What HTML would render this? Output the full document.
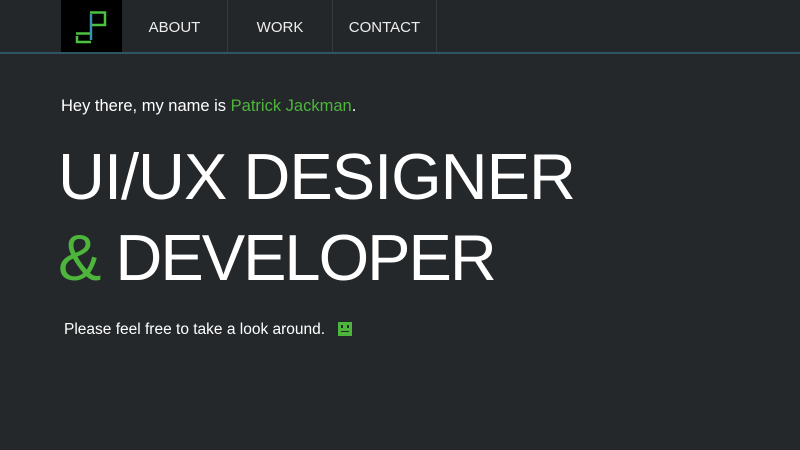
<!DOCTYPE html>
<html><head><meta charset="utf-8"><style>
html,body{margin:0;padding:0}
body{width:800px;height:450px;overflow:hidden;background:#24282b;font-family:"Liberation Sans","DejaVu Sans",sans-serif;color:#fff;position:relative}
.nav{position:absolute;left:0;top:0;width:800px;height:52px;border-bottom:2px solid #2f5565;background:#232729}
.logo{position:absolute;left:61px;top:0;width:61px;height:52px;background:#000}
.item{position:absolute;top:0;height:52px;line-height:56px;text-align:center;font-size:15px;color:#eee;border-right:1px solid #35393c}
.t{position:absolute;white-space:nowrap}
.g{color:#4db53c}
</style></head><body>
<div class="nav">
<div class="logo"><svg width="61" height="52"><path d="M29 12.5H44V25H31" stroke="#4cc23e" stroke-width="2.5" fill="none"/><path d="M15 33.5H29" stroke="#4cc23e" stroke-width="2.5"/><path d="M16 36V42H30" stroke="#4cc23e" stroke-width="2.5" fill="none"/><path d="M30 14V40" stroke="#3b8fb0" stroke-width="2.5"/></svg></div>
<div class="item" style="left:122px;width:105px">ABOUT</div>
<div class="item" style="left:228px;width:104px">WORK</div>
<div class="item" style="left:333px;width:103px">CONTACT</div>
</div>
<div class="t" style="left:61px;top:97px;font-size:16.5px">Hey there, my name is <span class="g">Patrick Jackman</span>.</div>
<div class="t" style="left:58px;top:139px;font-size:65px;letter-spacing:-1px">UI/UX DESIGNER</div>
<div class="t" style="left:58px;top:220px;font-size:65px;letter-spacing:-2px"><span class="g">&amp;</span> DEVELOPER</div>
<div class="t" style="left:64px;top:321px;font-size:15.5px">Please feel free to take a look around.</div>
<div style="position:absolute;left:338px;top:322px;width:14px;height:14px;background:#4db53c"><div style="position:absolute;left:3px;top:3px;width:2px;height:3px;background:#24282b"></div><div style="position:absolute;left:9px;top:3px;width:2px;height:3px;background:#24282b"></div><div style="position:absolute;left:3px;top:9px;width:8px;height:1px;background:#24282b"></div></div>
</body></html>
